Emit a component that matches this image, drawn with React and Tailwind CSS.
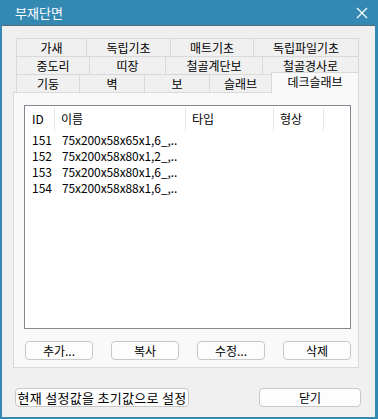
import React from "react";

const font = { fontFamily: '"Noto Sans CJK KR", "Liberation Sans", sans-serif' };

function Tab({ w, children }) {
  return (
    <div
      className="h-[18px] flex items-center justify-center border-t border-l border-r border-[#d9d9d9] bg-[#f0f0f0] text-[12px] text-black -ml-px first:ml-0"
      style={{ width: w }}
    >
      {children}
    </div>
  );
}

function Btn({ w, children, big }) {
  return (
    <div
      className={
        "h-[19px] flex items-center justify-center rounded-[4px] border border-[#c8c8c8] bg-[#fdfdfd] text-black " +
        (big ? "text-[13px] tracking-[0.3px]" : "text-[12px]")
      }
      style={{ width: w }}
    >
      {children}
    </div>
  );
}

const rows = [
  ["151", "75x200x58x65x1,6_,.."],
  ["152", "75x200x58x80x1,2_,.."],
  ["153", "75x200x58x80x1,6_,.."],
  ["154", "75x200x58x88x1,6_,.."],
];

export default function App() {
  return (
    <div className="w-[378px] h-[419px] flex flex-col bg-[#3489b3]" style={font}>
      <div className="h-[25px] flex items-center justify-between pl-[15px] pr-[10px] text-white">
        <span className="text-[13px] leading-none">부재단면</span>
        <svg width="12" height="12" viewBox="0 0 12 12">
          <path d="M1 1L11 11M11 1L1 11" stroke="white" strokeWidth="1.2" />
        </svg>
      </div>
      <div className="flex-1 ml-[2px] mr-[3px] mb-[2px] border-t border-[#5a6a75] bg-[#f0f0f0] flex flex-col">
        <div className="pl-[11px] pt-[12px]">
          <div className="flex pl-[3px]">
            <Tab w={71}>가새</Tab>
            <Tab w={85}>독립기초</Tab>
            <Tab w={84}>매트기초</Tab>
            <Tab w={106}>독립파일기초</Tab>
          </div>
          <div className="flex pl-[3px]">
            <Tab w={74}>중도리</Tab>
            <Tab w={77}>띠장</Tab>
            <Tab w={98}>철골계단보</Tab>
            <Tab w={97}>철골경사로</Tab>
          </div>
          <div className="flex pl-[3px] items-end h-[18px]">
            <Tab w={64}>기둥</Tab>
            <Tab w={66}>벽</Tab>
            <Tab w={66}>보</Tab>
            <Tab w={63}>슬래브</Tab>
            <div className="h-[21px] w-[88px] -ml-px -mb-px relative z-10 flex items-center justify-center border-t border-l border-r border-[#d9d9d9] bg-[#f9f9f9] text-[12px] pb-[3px]">
              데크슬래브
            </div>
          </div>
          <div className="w-[346px] h-[276px] border border-[#d9d9d9] bg-[#f9f9f9] flex flex-col pl-[10px] pt-[12px]">
            <div className="w-[327px] h-[224px] border border-[#828790] bg-white flex flex-col text-[12px]">
              <div className="h-[25px] flex items-center pt-[1px]">
                <div className="w-[30px] h-[23px] pl-[7px] flex items-center border-r border-[#e5e5e5]">ID</div>
                <div className="w-[131px] h-[23px] pl-[6px] flex items-center border-r border-[#e5e5e5]">이름</div>
                <div className="w-[88px] h-[23px] pl-[6px] flex items-center border-r border-[#e5e5e5]">타입</div>
                <div className="w-[50px] h-[23px] pl-[6px] flex items-center border-r border-[#e5e5e5]">형상</div>
              </div>
              <div className="flex flex-col pt-[1px]">
                {rows.map(([id, name]) => (
                  <div key={id} className="h-[16px] flex items-center leading-none">
                    <div className="w-[30px] pl-[7px]">{id}</div>
                    <div className="pl-[7px] tracking-[-0.1px]">{name}</div>
                  </div>
                ))}
              </div>
            </div>
            <div className="flex mt-[12px] ml-[1px] gap-[18px]">
              <Btn w={68}>추가...</Btn>
              <Btn w={68}>복사</Btn>
              <Btn w={68}>수정...</Btn>
              <Btn w={68}>삭제</Btn>
            </div>
          </div>
        </div>
        <div className="flex justify-between pl-[13px] pr-[14px] mt-[20px]">
          <Btn w={174} big>현재 설정값을 초기값으로 설정</Btn>
          <Btn w={102}>닫기</Btn>
        </div>
      </div>
    </div>
  );
}
